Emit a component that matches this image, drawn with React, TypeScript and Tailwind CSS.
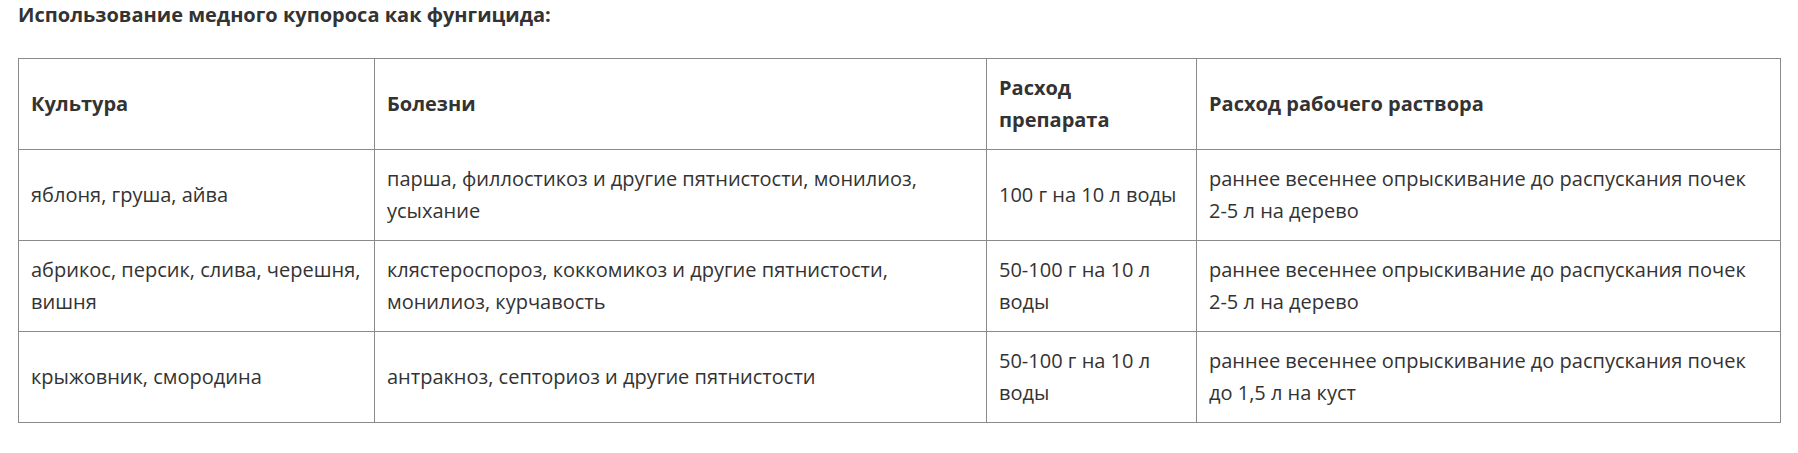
import React from "react";

const rows = [
  {
    c: "яблоня, груша, айва",
    d: "парша, филлостикоз и другие пятнистости, монилиоз, усыхание",
    p: "100 г на 10 л воды",
    r: ["раннее весеннее опрыскивание до распускания почек", "2-5 л на дерево"],
  },
  {
    c: "абрикос, персик, слива, черешня, вишня",
    d: "клястероспороз, коккомикоз и другие пятнистости, монилиоз, курчавость",
    p: "50-100 г на 10 л воды",
    r: ["раннее весеннее опрыскивание до распускания почек", "2-5 л на дерево"],
  },
  {
    c: "крыжовник, смородина",
    d: "антракноз, септориоз и другие пятнистости",
    p: "50-100 г на 10 л воды",
    r: ["раннее весеннее опрыскивание до распускания почек", "до 1,5 л на куст"],
  },
];

const cell =
  "border border-[#8a8a8a] px-[12px] pt-[13px] pb-[13px] align-middle text-left";

export default function App() {
  return (
    <div
      className="bg-white w-[1798px] h-[453px] text-[#333333]"
      style={{ fontFamily: '"Open Sans", "Noto Sans", sans-serif' }}
    >
      <div className="pl-[18px]">
        <h3 className="text-[20px] leading-[30px] font-bold mb-[28px]">
          Использование медного купороса как фунгицида:
        </h3>
        <table className="border-collapse table-fixed w-[1762px] text-[20px] leading-[32px]">
          <colgroup>
            <col className="w-[356px]" />
            <col className="w-[612px]" />
            <col className="w-[210px]" />
            <col className="w-[584px]" />
          </colgroup>
          <thead>
            <tr>
              <th className={`${cell} font-bold`}>Культура</th>
              <th className={`${cell} font-bold`}>Болезни</th>
              <th className={`${cell} font-bold`}>Расход препарата</th>
              <th className={`${cell} font-bold`}>Расход рабочего раствора</th>
            </tr>
          </thead>
          <tbody>
            {rows.map((row, i) => (
              <tr key={i}>
                <td className={cell}>{row.c}</td>
                <td className={cell}>{row.d}</td>
                <td className={cell}>{row.p}</td>
                <td className={cell}>
                  {row.r[0]}
                  <br />
                  {row.r[1]}
                </td>
              </tr>
            ))}
          </tbody>
        </table>
      </div>
    </div>
  );
}
